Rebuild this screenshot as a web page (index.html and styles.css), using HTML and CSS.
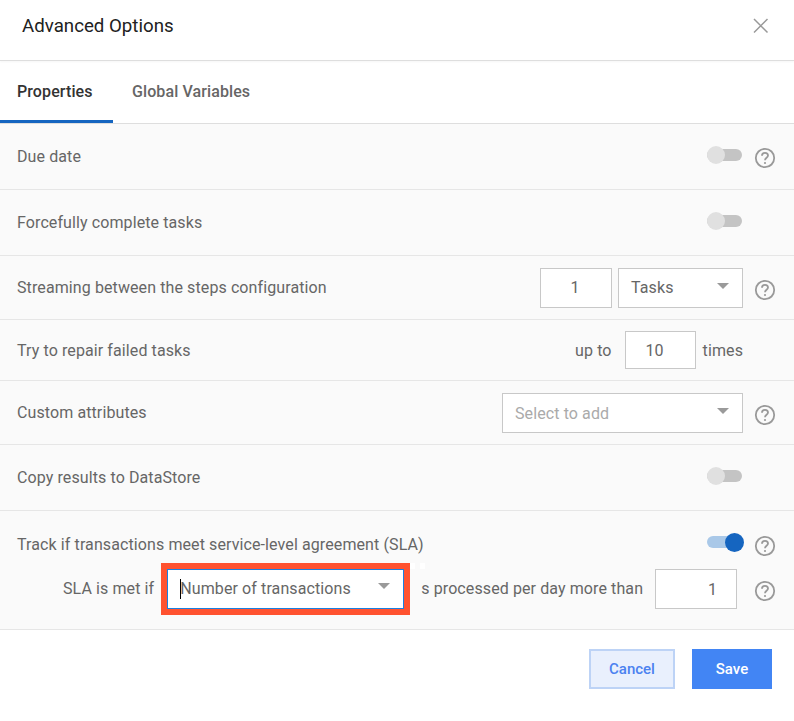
FILE: index.html
```html
<!DOCTYPE html>
<html lang="en">
<head>
    <meta charset="UTF-8">
    <meta name="viewport" content="width=device-width, initial-scale=1.0">
    <title>Advanced Options</title>
    <link rel="stylesheet" href="styles.css">
</head>
<body>

    <div class="modal-header">
        <h1>Advanced Options</h1>
        <svg class="close-icon" width="16" height="16" viewBox="0 0 16 16"><path d="M1 1l13.500 13.500M14.500 1L1 14.500"/></svg>
    </div>

    <div class="tabs">
        <div class="tab tab-active">Properties</div>
        <div class="tab">Global Variables</div>
    </div>

    <div class="option-row row-toggle">
        <span class="label">Due date</span>
        <div class="controls">
            <div class="switch"><span class="thumb"></span></div>
            <svg class="help" width="22" height="22" viewBox="0 0 22 22"><circle cx="11" cy="11" r="9.200"/><path d="M8 8.700c0-1.800 1.300-2.900 3-2.900s3 1.100 3 2.700c0 2.300-3 2.300-3 4.700"/><circle class="help-dot" cx="11" cy="16" r="1.100"/></svg>
        </div>
    </div>

    <div class="option-row row-toggle">
        <span class="label">Forcefully complete tasks</span>
        <div class="controls">
            <div class="switch"><span class="thumb"></span></div>
            <span class="help-spacer"></span>
        </div>
    </div>

    <div class="option-row row-streaming">
        <span class="label">Streaming between the steps configuration</span>
        <div class="controls">
            <div class="field field-center field-small">1</div>
            <div class="field select select-tasks">Tasks<span class="arrow"></span></div>
            <svg class="help" width="22" height="22" viewBox="0 0 22 22"><circle cx="11" cy="11" r="9.200"/><path d="M8 8.700c0-1.800 1.300-2.900 3-2.900s3 1.100 3 2.700c0 2.300-3 2.300-3 4.700"/><circle class="help-dot" cx="11" cy="16" r="1.100"/></svg>
        </div>
    </div>

    <div class="option-row row-repair">
        <span class="label">Try to repair failed tasks</span>
        <div class="controls">
            <span class="label">up to</span>
            <div class="field field-center field-repair">10</div>
            <span class="label">times</span>
            <span class="help-spacer"></span>
        </div>
    </div>

    <div class="option-row row-streaming">
        <span class="label">Custom attributes</span>
        <div class="controls">
            <div class="field select select-add"><span class="placeholder">Select to add</span><span class="arrow"></span></div>
            <svg class="help" width="22" height="22" viewBox="0 0 22 22"><circle cx="11" cy="11" r="9.200"/><path d="M8 8.700c0-1.800 1.300-2.900 3-2.900s3 1.100 3 2.700c0 2.300-3 2.300-3 4.700"/><circle class="help-dot" cx="11" cy="16" r="1.100"/></svg>
        </div>
    </div>

    <div class="option-row row-toggle">
        <span class="label">Copy results to DataStore</span>
        <div class="controls">
            <div class="switch"><span class="thumb"></span></div>
            <span class="help-spacer"></span>
        </div>
    </div>

    <div class="option-row row-sla">
        <div class="sla-top">
            <span class="label">Track if transactions meet service-level agreement (SLA)</span>
            <div class="controls">
                <div class="switch switch-on"><span class="thumb"></span></div>
                <svg class="help" width="22" height="22" viewBox="0 0 22 22"><circle cx="11" cy="11" r="9.200"/><path d="M8 8.700c0-1.800 1.300-2.900 3-2.900s3 1.100 3 2.700c0 2.300-3 2.300-3 4.700"/><circle class="help-dot" cx="11" cy="16" r="1.100"/></svg>
            </div>
        </div>
        <div class="sla-bottom">
            <span class="label">SLA is met if</span>
            <div class="highlight">
                <div class="field select select-sla"><span class="text-cursor"></span>Number of transactions<span class="arrow"></span></div>
                <span class="speck speck-one"></span>
                <span class="speck speck-two"></span>
            </div>
            <span class="label">s processed per day more than</span>
            <div class="field field-right field-sla">1</div>
            <svg class="help help-sla" width="22" height="22" viewBox="0 0 22 22"><circle cx="11" cy="11" r="9.200"/><path d="M8 8.700c0-1.800 1.300-2.900 3-2.900s3 1.100 3 2.700c0 2.300-3 2.300-3 4.700"/><circle class="help-dot" cx="11" cy="16" r="1.100"/></svg>
        </div>
    </div>

    <div class="modal-footer">
        <button class="btn btn-cancel">Cancel</button>
        <button class="btn btn-save">Save</button>
    </div>

</body>
</html>
```

FILE: styles.css
```css
body {
    font-family: Roboto, Arial, sans-serif;
    font-size: 16px;
    letter-spacing: 0.1px;
    color: #666;
    background-color: #ffffff;
    margin: 0;
}
.modal-header {
    display: flex;
    align-items: center;
    justify-content: space-between;
    height: 60px;
    padding: 0 25px 0 22px;
    border-bottom: 1px solid #dedede;
    box-shadow: 0 1px 2px rgba(0, 0, 0, 0.04);
}
h1 {
    margin: 0 0 9px;
    font-size: 18.700px;
    font-weight: 400;
    letter-spacing: 0;
    color: #212121;
}
.close-icon {
    margin-bottom: 8px;
    fill: none;
    stroke: #999;
    stroke-width: 1.500;
}
.tabs {
    display: flex;
    height: 62px;
    border-bottom: 1px solid #dedede;
}
.tab {
    padding: 21px 0 0;
    margin-left: 19px;
    font-weight: 500;
    color: #666;
}
.tab-active {
    width: 96px;
    margin-left: 0;
    padding-left: 17px;
    color: #333;
    border-bottom: 3px solid #1565c0;
}
.option-row {
    display: flex;
    align-items: center;
    justify-content: space-between;
    padding: 0 18px 0 17px;
    background-color: #fafafa;
    border-bottom: 1px solid #e6e6e6;
}
.row-toggle {
    height: 65px;
}
.row-streaming {
    height: 63px;
}
.row-repair {
    height: 60px;
}
.row-sla {
    display: block;
    height: 118px;
}
.controls {
    display: flex;
    align-items: center;
}
.label {
    white-space: nowrap;
}
.switch {
    position: relative;
    width: 35px;
    height: 12px;
    margin: -4px 1px 0 0;
    border-radius: 6px;
    background-color: #c4c4c4;
}
.thumb {
    position: absolute;
    top: -3px;
    left: 0;
    width: 18px;
    height: 18px;
    border-radius: 50%;
    background-color: #e0e0e0;
}
.switch-on {
    width: 36px;
    margin-right: 0;
    background-color: #a9c8e8;
}
.switch-on .thumb {
    left: auto;
    right: -1px;
    width: 19px;
    height: 19px;
    background-color: #1565c0;
}
.help {
    margin: 3px 0 0 11px;
    flex-shrink: 0;
    fill: none;
    stroke: #999;
    stroke-width: 1.800;
}
.help .help-dot {
    fill: #999;
    stroke: none;
}
.row-streaming .help {
    margin-top: 5px;
}
.help-sla {
    margin-left: 17px;
}
.help-spacer {
    width: 22px;
    margin-left: 11px;
}
.field {
    position: relative;
    box-sizing: border-box;
    display: flex;
    align-items: center;
    height: 40px;
    background-color: #ffffff;
    border: 1px solid #c8c8c8;
    white-space: nowrap;
}
.field-center {
    justify-content: center;
}
.field-right {
    justify-content: flex-end;
    padding-right: 19px;
}
.field-small {
    width: 72px;
    margin-right: 6px;
    padding-right: 2px;
}
.field-repair {
    width: 71px;
    height: 38px;
    margin: 0 7px 0 13px;
    padding-right: 11px;
}
.field-sla {
    width: 82px;
    margin-left: 12px;
}
.select {
    padding-left: 12px;
}
.select-tasks {
    width: 125px;
}
.select-add {
    width: 241px;
}
.placeholder {
    padding-top: 2px;
    color: #aaa;
}
.arrow {
    position: absolute;
    top: 14px;
    right: 13px;
    border-left: 6px solid transparent;
    border-right: 6px solid transparent;
    border-top: 6px solid #9a9a9a;
}
.sla-top {
    display: flex;
    align-items: center;
    justify-content: space-between;
    height: 66px;
}
.sla-bottom {
    display: flex;
    align-items: center;
    margin-top: -14px;
    padding-left: 46px;
}
.sla-bottom .label {
    padding-bottom: 1px;
}
.highlight {
    position: relative;
    margin: 0 11px 0 7px;
    border: 6px solid #ff5230;
    background-color: #ffffff;
}
.select-sla {
    width: 237px;
    padding: 0 0 1px 12px;
    border-color: #1a7fe0;
}
.select-sla .arrow {
    top: 13px;
}
.text-cursor {
    width: 1px;
    height: 20px;
    margin-right: -1px;
    background-color: #000;
}
.speck {
    position: absolute;
    top: -6px;
    width: 5px;
    height: 6px;
    background-color: #ffffff;
}
.speck-one {
    right: -11px;
}
.speck-two {
    right: -21px;
}
.modal-footer {
    display: flex;
    justify-content: flex-end;
    gap: 17px;
    padding: 19px 22px 0 0;
}
.btn {
    box-sizing: border-box;
    height: 40px;
    font-family: Roboto, Arial, sans-serif;
    font-size: 15px;
    font-weight: 500;
    cursor: pointer;
}
.btn-cancel {
    width: 86px;
    color: #4b82f0;
    background-color: #e9f0fd;
    border: 2px solid #bdd3f6;
}
.btn-save {
    width: 80px;
    color: #ffffff;
    background-color: #4285f4;
    border: none;
}
```
